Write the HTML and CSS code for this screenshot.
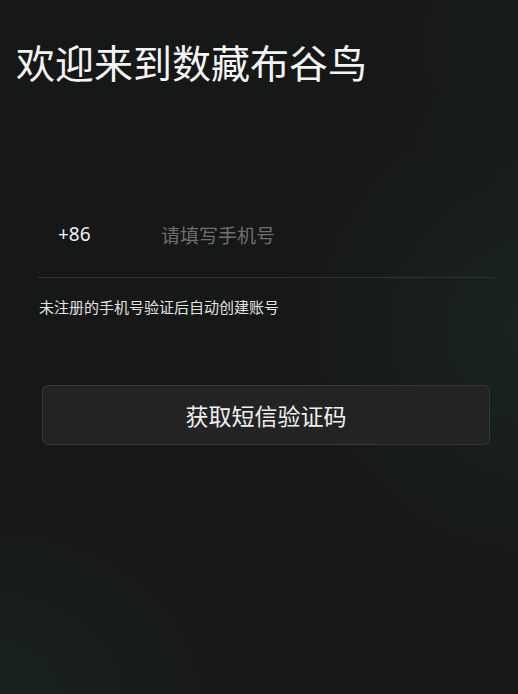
FILE: index.html
```html
<!DOCTYPE html>
<html lang="zh-CN">
<head>
<meta charset="utf-8">
<title>欢迎来到数藏布谷鸟</title>
<link rel="stylesheet" href="styles.css">
</head>
<body>
<main class="page">
  <h1 class="title">欢迎来到数藏布谷鸟</h1>
  <div class="form">
    <div class="phone-row">
      <span class="code">+86</span>
      <span class="placeholder">请填写手机号</span>
    </div>
    <p class="hint">未注册的手机号验证后自动创建账号</p>
    <div class="btn">获取短信验证码</div>
  </div>
</main>
</body>
</html>
```
FILE: styles.css
```css
html, body {
  margin: 0;
  padding: 0;
  height: 100%;
}
body {
  background-color: #161717;
  background-image:
    radial-gradient(ellipse 260px 260px at 540px 330px, rgba(30, 52, 40, 0.5), rgba(30, 52, 40, 0) 100%),
    radial-gradient(ellipse 260px 200px at -20px 700px, rgba(28, 46, 36, 0.6), rgba(28, 46, 36, 0) 100%),
    radial-gradient(ellipse 200px 160px at 560px 40px, rgba(26, 40, 32, 0.4), rgba(26, 40, 32, 0) 100%);
  font-family: "Noto Sans CJK SC", "Noto Sans", sans-serif;
  color: #fff;
  overflow: hidden;
}
.page {
  height: 694px;
  display: flex;
  flex-direction: column;
}
.title {
  margin: 33px 0 0 16px;
  font-size: 39px;
  font-weight: 400;
  line-height: 56px;
  color: #f4f4f4;
}
.form {
  margin-top: 112px;
  display: flex;
  flex-direction: column;
}
.phone-row {
  margin: 0 24px 0 38px;
  height: 66px;
  padding-bottom: 10px;
  display: flex;
  align-items: center;
  border-bottom: 1px solid #313333;
}
.code {
  margin-left: 20px;
  width: 103px;
  font-family: "Noto Sans", sans-serif;
  font-size: 19px;
  color: #f2f2f2;
}
.placeholder {
  font-size: 19px;
  color: #6e6f6f;
}
.hint {
  margin: 19px 0 0 39px;
  font-size: 15px;
  line-height: 20px;
  color: #e2e2e2;
}
.btn {
  margin: 68px 28px 0 42px;
  height: 58px;
  box-sizing: content-box;
  padding-bottom: 0;
  border: 1px solid #363737;
  border-radius: 6px;
  background: #232323;
  display: flex;
  align-items: center;
  justify-content: center;
  font-size: 23px;
  line-height: 30px;
  color: #f0f0f0;
}
.btn-label {
  display: block;
}
```
